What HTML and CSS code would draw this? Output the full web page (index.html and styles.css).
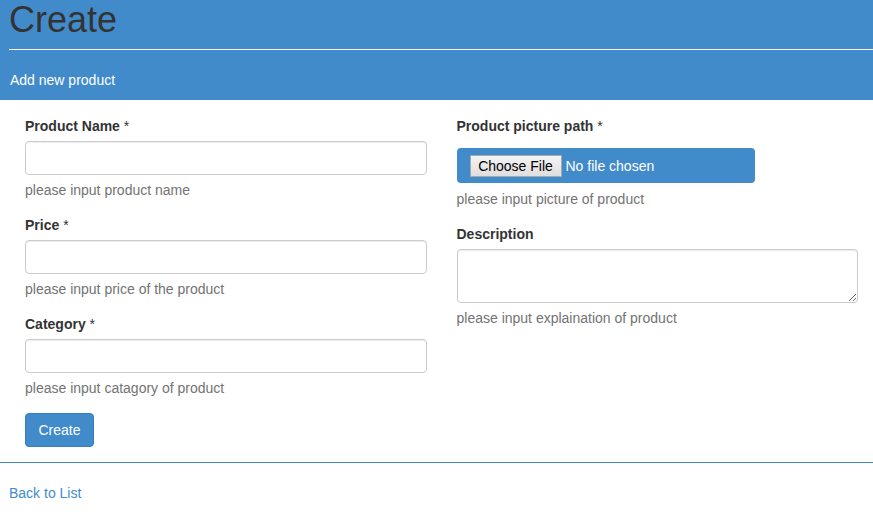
FILE: index.html
```html
<!DOCTYPE html>
<html>
<head>
<meta charset="utf-8">
<title>Create</title>
<link rel="stylesheet" href="styles.css">
</head>
<body>
<header class="page-header">
  <h1 class="title">Create</h1>
  <hr class="header-rule">
  <p class="subtitle">Add new product</p>
</header>
<form class="product-form">
  <div class="col">
    <div class="form-group">
      <label class="field-label">Product Name <span class="req">*</span></label>
      <input class="form-control" type="text">
      <p class="help">please input product name</p>
    </div>
    <div class="form-group">
      <label class="field-label">Price <span class="req">*</span></label>
      <input class="form-control" type="text">
      <p class="help">please input price of the product</p>
    </div>
    <div class="form-group">
      <label class="field-label">Category <span class="req">*</span></label>
      <input class="form-control" type="text">
      <p class="help">please input catagory of product</p>
    </div>
    <button class="btn-primary" type="button">Create</button>
  </div>
  <div class="col">
    <div class="form-group">
      <label class="field-label">Product picture path <span class="req">*</span></label>
      <div class="file-box">
        <button class="file-btn" type="button">Choose File</button>
        <span class="file-name">No file chosen</span>
      </div>
      <p class="help help-file">please input picture of product</p>
    </div>
    <div class="form-group">
      <label class="field-label">Description</label>
      <textarea class="form-control textarea"></textarea>
      <p class="help">please input explaination of product</p>
    </div>
  </div>
</form>
<hr class="footer-rule">
<a class="back-link" href="#">Back to List</a>
</body>
</html>
```
FILE: styles.css
```css
* { box-sizing: border-box; }
body {
  margin: 0;
  font-family: "Liberation Sans", Arial, sans-serif;
  font-size: 14px;
  line-height: 20px;
  color: #333;
  background: #fff;
}
.page-header {
  background: #428bca;
  padding: 0 0 10px 9px;
}
.title {
  margin: 0;
  font-size: 36px;
  line-height: 40px;
  font-weight: 500;
  color: #333;
}
.header-rule {
  margin: 9px 0 20px 0;
  border: 0;
  border-top: 1px solid #fff;
  height: 0;
}
.subtitle {
  margin: 0;
  color: #fff;
  padding-left: 1px;
}
.product-form {
  display: grid;
  grid-template-columns: 1fr 1fr;
  column-gap: 30px;
  padding: 16px 15px 0 25px;
  align-items: start;
}
.form-group { margin-bottom: 15px; }
.field-label {
  display: block;
  font-weight: bold;
  margin-bottom: 5px;
}
.req { font-weight: normal; }
.form-control {
  display: block;
  width: 100%;
  height: 34px;
  border: 1px solid #ccc;
  border-radius: 4px;
  box-shadow: inset 0 1px 1px rgba(0,0,0,0.075);
  background: #fff;
  font: inherit;
  margin: 0;
  padding: 6px 12px;
}
.textarea { height: 54px; resize: vertical; }
.help {
  margin: 5px 0 0 0;
  color: #737373;
}
.help-file { margin-top: 6px; }
.file-box {
  margin-top: 12px;
  width: 298px;
  height: 35px;
  background: #428bca;
  border-radius: 4px;
  display: flex;
  align-items: center;
  padding-left: 13px;
  gap: 4px;
}
.file-btn {
  font-family: "Liberation Sans", Arial, sans-serif;
  font-size: 14px;
  color: #000;
  height: 22px;
  line-height: 18px;
  width: 92px;
  padding: 0;
  border: 1px solid #a8a8a8;
  border-radius: 0;
  background: linear-gradient(#f4f4f4, #dedede);
}
.file-name { color: #fff; }
.btn-primary {
  display: block;
  width: 69px;
  height: 34px;
  background: #428bca;
  border: 1px solid #357ebd;
  border-radius: 4px;
  color: #fff;
  font-family: "Liberation Sans", Arial, sans-serif;
  font-size: 14px;
  padding: 0;
  margin-bottom: 15px;
}
.footer-rule {
  margin: 0 0 20px 0;
  border: 0;
  border-top: 1px solid #428bca;
  height: 0;
}
.back-link {
  display: inline-block;
  margin-left: 9px;
  color: #428bca;
  text-decoration: none;
}
```
